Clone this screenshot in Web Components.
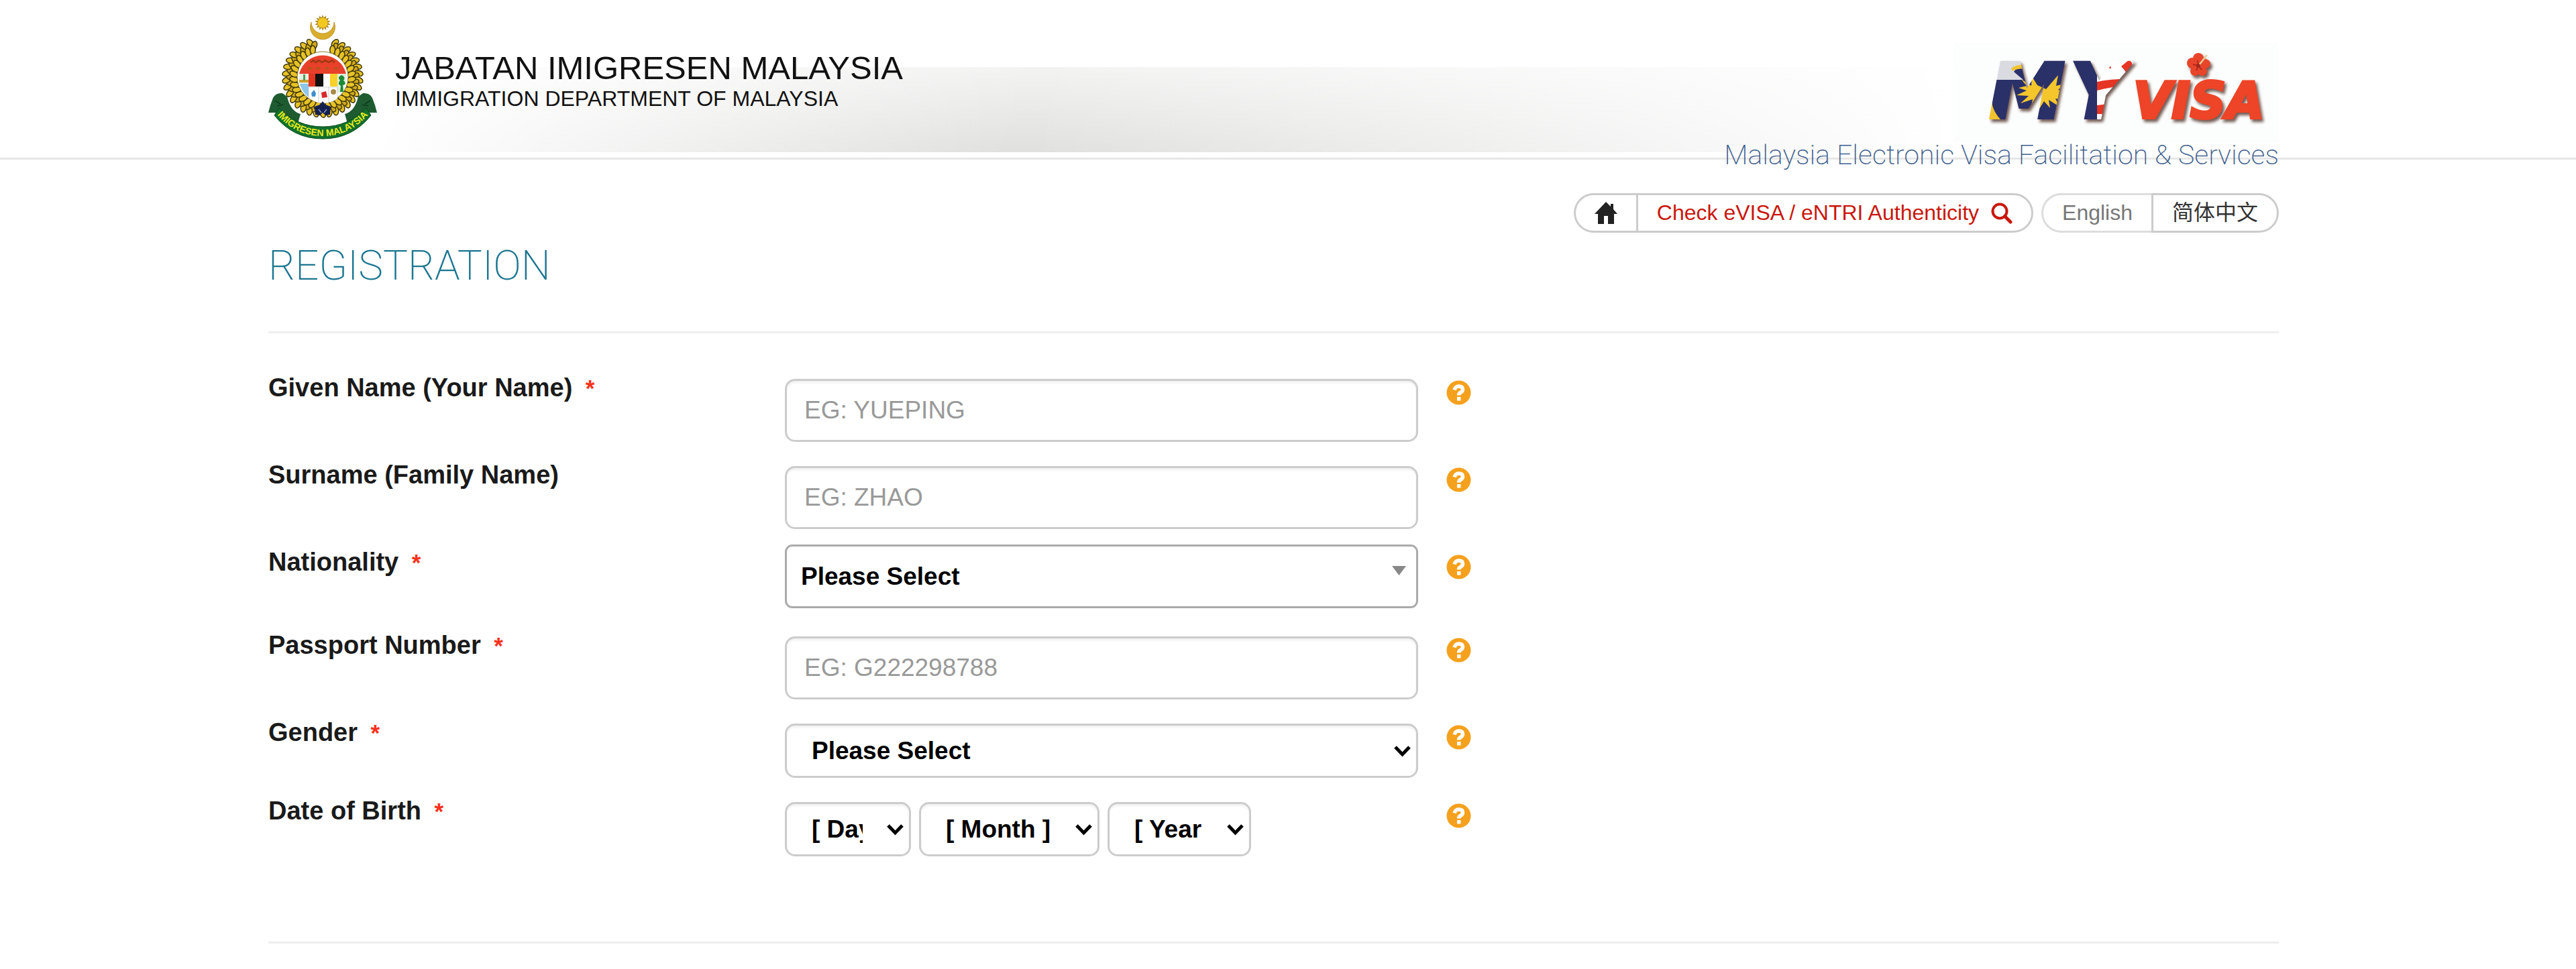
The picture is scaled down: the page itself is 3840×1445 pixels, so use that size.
<!DOCTYPE html>
<html lang="en">
<head>
<meta charset="utf-8">
<title>Registration - Jabatan Imigresen Malaysia</title>
<style>
  html, body { margin: 0; background: #fff; }
  body {
    font-family: "Liberation Sans", "Noto Sans CJK SC", sans-serif;
    font-size: 37px;
    line-height: 53px;
    color: #1a1a1a;
  }
</style>
</head>
<body>
<site-header></site-header>
<page-main>
  <site-nav slot="nav"></site-nav>
  <page-title slot="title">REGISTRATION</page-title>
  <form-field label="Given Name (Your Name)" required kind="text" placeholder="EG: YUEPING"></form-field>
  <form-field label="Surname (Family Name)" kind="text" placeholder="EG: ZHAO"></form-field>
  <form-field label="Nationality" required kind="combo" options="Please Select"></form-field>
  <form-field label="Passport Number" required kind="text" placeholder="EG: G222298788"></form-field>
  <form-field label="Gender" required kind="select" options="Please Select"></form-field>
  <form-field label="Date of Birth" required kind="date" options="[ Day ]|[ Month ]|[ Year ]"></form-field>
</page-main>

<script>
const define = (name, html, setup) => {
  const template = document.createElement('template');
  template.innerHTML = html;
  customElements.define(name, class extends HTMLElement {
    constructor() {
      super();
      this.attachShadow({ mode: 'open' }).append(template.content.cloneNode(true));
    }
    connectedCallback() {
      if (setup && !this.ready) { this.ready = true; setup(this, this.shadowRoot); }
    }
  });
};

/* Department crest: crescent and star, wreath, shield, ribbon */
define('crest-logo', `
<style>:host{display:block;flex:none} svg{display:block;width:162px;height:186px;overflow:visible}</style>
<svg viewBox="0 0 162 186" role="img" aria-label="Crest">
  <path d="M64 11A18.500 18.500 0 1 0 98 11A17 17 0 1 1 64 11Z" fill="#d9ae2c" stroke="#b48a20" stroke-width=".8"/>
  <g id="star"></g>
  <circle cx="81" cy="12" r="7.500" fill="#f2c81e"/>
  <g id="wreath"></g>
  <circle cx="81" cy="93" r="38" fill="#fff" stroke="#8a7a30" stroke-width="1"/>
  <path d="M46 88A36 36 0 0 1 116 88Z" fill="#e8402a"/>
  <path d="M63 71l4-3 4 3 4-3 5 3 5-3 5 3 5-3 4 3" fill="none" stroke="#9c3a10" stroke-width="2.500"/>
  <path d="M59 81l3-2 3 2M71 81l3-2 3 2M84 81l3-2 3 2M98 81l3-2 3 2" fill="none" stroke="#b8541a" stroke-width="3"/>
  <path d="M60 88h10v19H60z" fill="#e33420"/><path d="M70 88h12v19H70z" fill="#111"/>
  <path d="M82 88h10v19H82z" fill="#fff"/><path d="M92 88h11v19H92z" fill="#f8d02a"/>
  <path d="M103 88h13q1 16-7 29l-6-2z" fill="#dfeee0"/>
  <path d="M109 90q7 3 3 8 6 5-1 7l1 10h-5l1-9q-6-3-1-8-5-5 2-8z" fill="#1d8a35"/>
  <path d="M46 88h14v19H46z" fill="#e6efe6"/><path d="M46 97h14v4H46z" fill="#c9a22c"/><path d="M52 89h3v9h-3z" fill="#579a58"/>
  <path d="M47 103h13v20q-10-8-13-20z" fill="#8cc6e8"/>
  <path d="M60 108h43v17q-10 7-21 7t-22-8z" fill="#fff" stroke="#bbb" stroke-width=".6"/>
  <path d="M75 108v22M90 108v22" stroke="#ccc"/>
  <path d="M68 112l3 5-1 5h-5l-1-5z" fill="#3f8fcf"/><path d="M79 116l7-2 2 9-8 1z" fill="#d82a2a"/>
  <circle cx="97" cy="115" r="4" fill="#a98a4a"/>
  <path d="M69 137l8-3 4-5 4 5 8 3-1 12-7 1-4-4-4 4-7-1z" fill="#14204e"/>
  <path d="M75 141l4 5M87 141l-4 5" stroke="#8894c8" stroke-width="1.500"/>
  <path d="M7 124q4-8 14-7l7 5q5 22 20 26l-4 14-22-12-10-4-12 0 3-11z" fill="#1e5b31"/>
  <path d="M155 124q-4-8-14-7l-7 5q-5 22-20 26l4 14 22-12 10-4 12 0-3-11z" fill="#1e5b31"/>
  <path d="M10 128l8 5M13 136l9-2M152 128l-8 5M149 136l-9-2" stroke="#0d3c1d" stroke-width="1.500"/>
  <path d="M16 139q27 28 65 28t65-28l7 11q-28 35-72 35T9 150z" fill="#11702b" stroke="#0b4a1c"/>
  <path id="arc" d="M13 149q28 32 68 32t68-32" fill="none"/>
  <text font-family="Liberation Sans" font-weight="700" font-size="14" fill="#e9ea1e" text-anchor="middle"><textPath href="#arc" startOffset="50%">IMIGRESEN MALAYSIA</textPath></text>
</svg>`, (host, root) => {
  const NS = 'http://www.w3.org/2000/svg';
  const add = (parent, tag, attrs) => {
    const n = document.createElementNS(NS, tag);
    for (const k in attrs) n.setAttribute(k, attrs[k]);
    parent.append(n);
  };
  const star = root.getElementById('star');
  for (let i = 0; i < 14; i++) add(star, 'path', { d: 'M79 5L81-0L83 5Z', fill: '#b08a20', transform: `rotate(${i * 360 / 14} 81 12)` });
  const wreath = root.getElementById('wreath');
  for (let i = 0; i < 31; i++) {
    const a = 20 + i * 320 / 30;
    [[54, 0], [49, 5], [43, 0]].forEach(([r, d], k) => {
      const t = (a + d - 90) * Math.PI / 180;
      const x = 81 + r * Math.cos(t), y = 93 + r * Math.sin(t);
      const dir = (a < 180 ? -1 : 1) * (k === 1 ? 40 : k ? 20 : -20);
      add(wreath, 'ellipse', { cx: x, cy: y, rx: 4, ry: 6.5, fill: k === 1 ? '#d0a81e' : '#e6c226', stroke: '#40380c', 'stroke-width': 1.5, transform: `rotate(${a + dir} ${x} ${y})` });
    });
  }
});

/* MYVISA wordmark filled with flag motifs */
define('myvisa-logo', `
<style>
  :host{display:block;background:#fcfefd}
  svg{display:block;width:485px;height:148px}
  .shadow{filter:drop-shadow(3px 4px 2px rgba(70,35,25,.75))}
  text{font-family:"DejaVu Sans";font-weight:700;font-style:italic}
</style>
<svg viewBox="0 0 485 148" role="img" aria-label="MYVISA">
  <defs>
    <pattern id="jalur" patternUnits="userSpaceOnUse" width="485" height="148">
      <rect width="485" height="148" fill="#2a3068"/>
      <path d="M66 22h48l-6 16q-14-2-18 5l14 12H60z" fill="#d9dbe0"/>
      <path d="M86 38q10-8 26-4l-4 5q-12-2-20 3z" fill="#f1c32e"/>
      <path d="M42 118l15-34q0 18 17 34z" fill="#f1c32e"/>
      <path d="M101 54l15 10 1-14 8 13 13 6 18-21-3 16 12-3-9 9 15 4-14 4 12 8-17-3 6 12-16-10 2 12-9-10-10 16-1-15-8 6 2-10-18 6 12-11-18-1 15-7-12-4 12-3z" fill="#f4c62c"/>
    </pattern>
    <pattern id="stripes" patternUnits="userSpaceOnUse" width="485" height="148">
      <rect width="485" height="148" fill="#fff"/>
      <path d="M170 20h44v100h-44z" fill="#2a3068"/>
      <path d="M214 22h18l3 16h-21zM214 58q26-5 52-4l-11 11q-20 0-41 6zM214 93q14-2 28-3l-4 16h-24z" fill="#e63425"/>
      <path d="M250 35l12-10 12 14-12 14q-4-10-12-18z" fill="#e63425"/>
      <path d="M266 22h34l-26 26q-2-12-8-15z" fill="#dfe2e4"/>
    </pattern>
  </defs>
  <g class="shadow">
    <text x="53" y="112" font-size="114" fill="url(#jalur)" stroke="url(#jalur)" stroke-width="4">M</text>
    <text x="174" y="112" font-size="114" fill="url(#stripes)" stroke="url(#stripes)" stroke-width="4">Y</text>
    <text x="268" y="112" font-size="74" fill="#ee4427" stroke="#ee4427" stroke-width="4">VISA</text>
    <g fill="#e8452a">
      <ellipse cx="365" cy="23" rx="8" ry="8"/><ellipse cx="375" cy="31" rx="8" ry="7"/>
      <ellipse cx="371" cy="42" rx="7" ry="7"/><ellipse cx="360" cy="42" rx="7" ry="7"/><ellipse cx="356" cy="30" rx="8" ry="8"/>
    </g>
  </g>
  <path d="M366 33L378 18" stroke="#eccf9a" stroke-width="2.500"/>
  <path d="M365 34l-1-8M365 34l-8-2M365 34l-3 7M365 34l5 6" stroke="#b32a1a" stroke-width="2"/>
  <circle cx="365" cy="34" r="3" fill="#a8261c"/>
</svg>`);

define('site-header', `
<style>
  :host{display:block;height:235px;border-bottom:3px solid #e6e6e6;box-sizing:content-box}
  .bar{
    height:235px;margin:0 443px 0 400px;display:flex;justify-content:space-between;align-items:flex-start;
    background:
      linear-gradient(112deg,#fff 8%,rgba(255,255,255,0) 45%) left bottom 8px / 84% 127px no-repeat,
      linear-gradient(to right,rgba(255,255,255,0) 45%,#fff 100%) left bottom 8px / 84% 127px no-repeat,
      linear-gradient(to bottom,#f3f3f2,#e0e0de) left bottom 8px / 84% 127px no-repeat;
  }
  .dept{display:flex;gap:27px;padding-top:22px}
  .names{padding-top:51px;color:#111}
  .names p{margin:0;white-space:nowrap}
  .ms{font-size:49px;line-height:56px}
  .en{font-size:32px;line-height:37px}
  .brand{padding-top:64px;display:flex;flex-direction:column;align-items:flex-end}
  .tag{margin:0;font:200 41px/38px Roboto,"Liberation Sans",sans-serif;color:#3f5f8d;white-space:nowrap}
</style>
<header class="bar">
  <div class="dept">
    <crest-logo></crest-logo>
    <div class="names">
      <p class="ms">JABATAN IMIGRESEN MALAYSIA</p>
      <p class="en">IMMIGRATION DEPARTMENT OF MALAYSIA</p>
    </div>
  </div>
  <div class="brand">
    <myvisa-logo></myvisa-logo>
    <p class="tag">Malaysia Electronic Visa Facilitation &amp; Services</p>
  </div>
</header>`);

define('site-nav', `
<style>
  :host{display:block}
  nav{display:flex;justify-content:flex-end;gap:12px;font-size:32px;line-height:53px}
  .group{display:flex}
  a{
    display:flex;align-items:center;gap:18px;height:53px;padding:0 28px;
    border:3px solid #ccc;color:#333;text-decoration:none;background:#fff;white-space:nowrap;
  }
  a:first-child{border-radius:30px 0 0 30px;border-right-width:0}
  a:last-child{border-radius:0 30px 30px 0}
  .check{color:#c9170c}
  .current{color:#777;border-color:#ddd}
  svg{display:block}
</style>
<nav>
  <div class="group">
    <a href="#home" aria-label="Home"><svg width="34" height="33" viewBox="0 0 34 33"><path d="M17 0L0 18h5v15h9V21h6v12h9V18h5L28 11V3h-4v4z" fill="#222"/></svg></a>
    <a class="check" href="#check">Check eVISA / eNTRI Authenticity
      <svg width="32" height="32" viewBox="0 0 32 32" fill="none" stroke="#c9170c"><circle cx="13" cy="13" r="10.500" stroke-width="4"/><path d="M20.500 20.500L29 29" stroke-width="5" stroke-linecap="round"/></svg></a>
  </div>
  <div class="group">
    <a class="current" href="#en">English</a>
    <a href="#zh" lang="zh-CN">简体中文</a>
  </div>
</nav>`);

define('page-title', `
<style>
  :host{display:block}
  h1{margin:13px 0 62px;font:200 62px/72px Roboto,"Liberation Sans",sans-serif;color:#1b7590}
</style>
<h1><slot></slot></h1>`);

define('page-main', `
<style>
  :host{display:block}
  main{margin:0 443px 0 400px;padding-top:50px}
  hr{margin:0;border:0;border-top:3px solid #eee}
  form{padding:55px 0 104px}
</style>
<main>
  <slot name="nav"></slot>
  <slot name="title"></slot>
  <hr>
  <form><slot></slot></form>
  <hr>
</main>`);

define('help-tip', `
<style>
  :host{display:block}
  button{display:block;width:37px;height:37px;padding:0;border:0;background:none;cursor:pointer}
  svg{display:block}
</style>
<button type="button" aria-label="Help"><svg width="37" height="37" viewBox="0 0 37 37">
  <circle cx="18.500" cy="18.500" r="18" fill="#f5a11d"/>
  <path d="M12 14.500Q13.500 9 18.500 9Q24.500 9 24.500 13.700Q24.500 16.500 21 18.500Q18.500 20 18.500 22.500" fill="none" stroke="#fff" stroke-width="5.500"/>
  <rect x="16" y="25" width="5.500" height="5.500" fill="#fff"/></svg></button>`);

define('form-field', `
<style>
  :host{display:grid;grid-template-columns:770fr 944fr 1283fr;align-items:start;padding-bottom:23px}
  label{font-size:38px;font-weight:700;white-space:pre}
  .star{color:#f9301a;font-size:35px}
  .control{display:flex;gap:12px;padding-top:13px}
  .control.combo{padding:0 0 6px}
  .box{position:relative;display:block;flex:0 1 auto;min-width:0}
  .box.full{flex:1}
  .day{width:188px}.month{width:269px}.year{width:214px}
  input,select{
    display:block;box-sizing:border-box;width:100%;margin:0;font:inherit;background:#fff;
    border:3px solid #ccc;border-radius:15px;box-shadow:inset 0 3px 3px rgba(0,0,0,.06);
  }
  input{height:94px;padding:0 26px}
  input::placeholder{color:#999;opacity:1}
  select{height:81px;padding:0 69px 0 37px;font-weight:700;color:#000;appearance:none;overflow:hidden}
  .combo select{height:95px;padding-left:21px;border-color:#aaa;border-radius:11px;box-shadow:none}
  svg{position:absolute;pointer-events:none;right:10px;top:32px}
  .combo svg{right:18px;top:32px}
  help-tip{margin:15px 0 0 42px}
</style>
<label for="c0"></label><div class="control"></div><help-tip></help-tip>`, (host, root) => {
  const label = root.querySelector('label');
  const control = root.querySelector('.control');
  const kind = host.getAttribute('kind');
  label.textContent = host.getAttribute('label');
  if (host.hasAttribute('required')) {
    const s = document.createElement('span');
    s.className = 'star';
    s.textContent = '  *';
    label.append(s);
  }
  if (kind === 'text') {
    const box = document.createElement('div');
    box.className = 'box full';
    const input = document.createElement('input');
    input.id = 'c0';
    input.type = 'text';
    input.placeholder = host.getAttribute('placeholder');
    box.append(input);
    control.append(box);
    return;
  }
  control.classList.add(kind);
  const sizes = ['day', 'month', 'year'];
  host.getAttribute('options').split('|').forEach((text, i) => {
    const box = document.createElement('div');
    box.className = 'box ' + (kind === 'date' ? sizes[i] : 'full');
    box.innerHTML = '<select><option></option></select>' + (kind === 'combo'
      ? '<svg width="21" height="14" viewBox="0 0 21 14"><path d="M0 0h21L10.500 14z" fill="#888"/></svg>'
      : '<svg width="27" height="18" viewBox="0 0 27 18"><path d="M3 3l10.500 11L24 3" fill="none" stroke="#000" stroke-width="5"/></svg>');
    const select = box.querySelector('select');
    select.id = 'c' + i;
    if (i) select.setAttribute('aria-label', sizes[i]);
    select.options[0].textContent = text;
    control.append(box);
  });
});
</script>
</body>
</html>
